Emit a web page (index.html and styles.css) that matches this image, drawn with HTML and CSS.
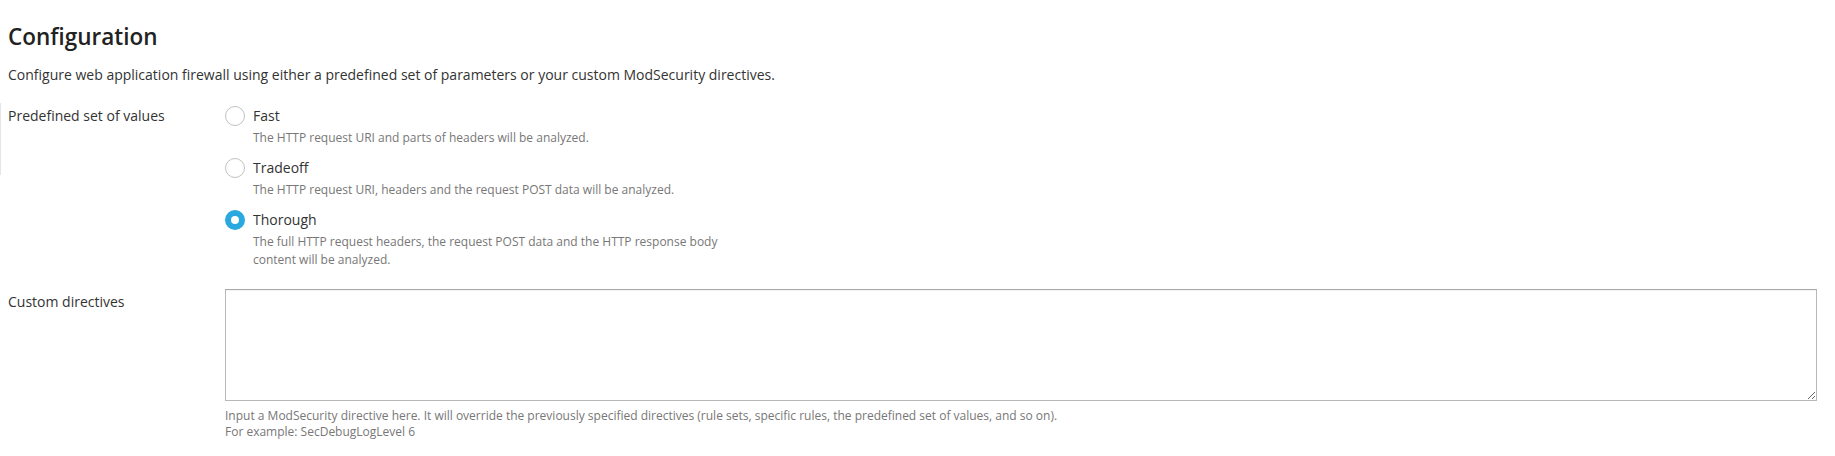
FILE: index.html
```html
<!DOCTYPE html>
<html lang="en">
<head>
<meta charset="utf-8">
<title>Configuration</title>
<link rel="stylesheet" href="styles.css">
</head>
<body>
<div class="page">
  <h2 class="title">Configuration</h2>
  <p class="intro">Configure web application firewall using either a predefined set of parameters or your custom ModSecurity directives.</p>

  <div class="form-row form-row--marked">
    <div class="form-label">Predefined set of values</div>
    <div class="form-field options">
      <label class="option">
        <span class="option-head"><span class="radio"></span><span class="option-name">Fast</span></span>
        <span class="option-desc">The HTTP request URI and parts of headers will be analyzed.</span>
      </label>
      <label class="option">
        <span class="option-head"><span class="radio"></span><span class="option-name">Tradeoff</span></span>
        <span class="option-desc">The HTTP request URI, headers and the request POST data will be analyzed.</span>
      </label>
      <label class="option">
        <span class="option-head"><span class="radio radio--checked"></span><span class="option-name">Thorough</span></span>
        <span class="option-desc">The full HTTP request headers, the request POST data and the HTTP response body content will be analyzed.</span>
      </label>
    </div>
  </div>

  <div class="form-row form-row--custom">
    <div class="form-label form-label--custom">Custom directives</div>
    <div class="form-field">
      <textarea class="directives"></textarea>
      <div class="help">Input a ModSecurity directive here. It will override the previously specified directives (rule sets, specific rules, the predefined set of values, and so on).<br>For example: SecDebugLogLevel 6</div>
    </div>
  </div>
</div>
</body>
</html>
```

FILE: styles.css
```css
html, body {
  margin: 0;
  padding: 0;
  background: #ffffff;
}

body {
  font-family: "Open Sans", "DejaVu Sans", sans-serif;
  color: #333333;
}

.page {
  padding: 0 18px 0 8px;
  position: relative;
}

.title {
  margin: 0;
  padding-top: 23px;
  font-size: 22.5px;
  line-height: 28px;
  font-weight: 600;
  color: #222222;
}

.intro {
  margin: 15px 0 0 0;
  font-size: 14px;
  line-height: 18px;
  color: #333333;
}

.form-row {
  display: grid;
  grid-template-columns: 217px 1fr;
}

.form-row--marked {
  margin-top: 22px;
  position: relative;
}

.form-row--marked::before {
  content: "";
  position: absolute;
  left: -8px;
  top: -3px;
  height: 72px;
  border-left: 1px solid #e6e6e6;
}

.form-label {
  font-size: 14px;
  line-height: 18px;
  padding-top: 1px;
  color: #333333;
}

.options {
  display: flex;
  flex-direction: column;
  gap: 11px;
}

.option {
  display: flex;
  flex-direction: column;
}

.option-head {
  display: flex;
  align-items: center;
  gap: 8px;
  height: 20px;
}

.radio {
  box-sizing: border-box;
  width: 20px;
  height: 20px;
  border-radius: 50%;
  border: 1px solid #c2c2c2;
  background: #ffffff;
  flex: none;
}

.radio--checked {
  border: 6px solid #29a9df;
}

.option-name {
  font-size: 14px;
  line-height: 20px;
  color: #333333;
}

.option-desc {
  margin-top: 3px;
  padding-left: 28px;
  max-width: 480px;
  font-size: 12px;
  line-height: 18px;
  color: #777777;
}

.form-row--custom {
  margin-top: 20px;
}

.form-label--custom {
  padding-top: 4px;
}

.directives {
  display: block;
  box-sizing: border-box;
  width: 100%;
  height: 112px;
  margin: 0;
  border: 1px solid #b8b8b8;
  border-top-color: #aaaaaa;
  box-shadow: inset 0 1px 1px rgba(0, 0, 0, 0.06);
  border-radius: 0;
  font-family: "Open Sans", sans-serif;
  font-size: 13px;
  padding: 4px 6px;
  outline: none;
}

.help {
  margin-top: 7px;
  font-size: 12px;
  line-height: 16px;
  color: #777777;
}
```
